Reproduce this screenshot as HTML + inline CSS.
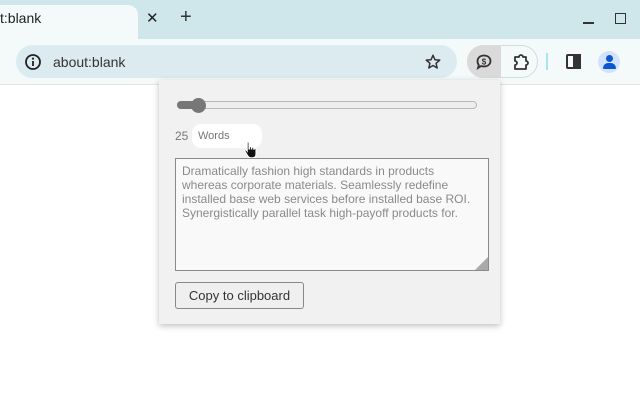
<!DOCTYPE html>
<html><head><meta charset="utf-8"><style>
*{box-sizing:border-box;margin:0;padding:0}
body{width:640px;height:400px;background:#fff;font-family:"Liberation Sans",sans-serif;position:relative;overflow:hidden}
.tabbar{position:absolute;left:0;top:0;width:640px;height:40px;background:#cfe6ea}
.tab{position:absolute;left:-10px;top:5px;width:148px;height:36px;background:#f4f9fa;border-radius:10px 10px 0 0}
.toolbar{position:absolute;left:0;top:39px;width:640px;height:46px;background:#f4f9fa;border-bottom:1px solid #dfe6e8}
.omni{position:absolute;left:16px;top:45px;width:441px;height:33px;background:#dcebef;border-radius:17px}
.abs{position:absolute}
.popup{position:absolute;left:159px;top:80px;width:341px;height:244px;background:#f1f1f1;box-shadow:0 2px 6px rgba(0,0,0,.25)}
</style></head><body>
<div class="tabbar"></div>
<div class="tab"></div>
<div class="abs" style="left:0;top:10px;font-size:14px;color:#1f1f1f">t:blank</div>
<div class="abs" style="left:146px;top:9px;font-size:15px;color:#222">✕</div>
<div class="abs" style="left:180px;top:6px;font-size:20px;color:#333">+</div>
<div class="abs" style="left:583px;top:22px;width:11px;height:2px;background:#333"></div>
<div class="abs" style="left:615px;top:13px;width:11px;height:11px;border:1.5px solid #333"></div>
<div class="toolbar"></div>
<div class="omni"></div>
<svg class="abs" style="left:24px;top:53px" width="18" height="18" viewBox="0 0 18 18"><circle cx="9" cy="9" r="7" fill="none" stroke="#222" stroke-width="1.8"/><rect x="8.1" y="8" width="1.8" height="5" fill="#222"/><circle cx="9" cy="5.6" r="1.1" fill="#222"/></svg>
<div class="abs" style="left:53px;top:54px;font-size:14px;color:#333">about:blank</div>
<svg class="abs" style="left:424px;top:53px" width="18" height="18" viewBox="0 0 24 24"><path d="M12 3l2.6 6 6.4.5-4.9 4.2 1.5 6.3L12 16.7 6.4 20l1.5-6.3L3 9.5 9.4 9z" fill="none" stroke="#333" stroke-width="2" stroke-linejoin="round"/></svg>
<div class="abs" style="left:467px;top:45px;width:71px;height:33px;border:1px solid #cfdde0;border-radius:17px"></div>
<div class="abs" style="left:467px;top:45px;width:34px;height:33px;background:#dadada;border-radius:17px 0 0 17px"></div>
<svg class="abs" style="left:474px;top:52px" width="20" height="20" viewBox="0 0 20 20"><path d="M10 3.5c4 0 6.5 2.5 6.5 5.5s-2.5 5.5-6.5 5.5c-1 0-2-.2-2.8-.5L4 16l.8-3C3.9 12 3.5 10.6 3.5 9 3.5 6 6 3.5 10 3.5z" fill="none" stroke="#333" stroke-width="1.8"/><text x="10" y="12.5" font-size="8" font-weight="bold" text-anchor="middle" fill="#333" font-family="Liberation Sans">$</text></svg>
<svg class="abs" style="left:511px;top:52px" width="20" height="20" viewBox="0 0 20 20"><path d="M4 5h4a2 2 0 0 1 4 0h3v4a2 2 0 0 1 0 4v4H4v-4a2 2 0 0 0 0-4z" fill="none" stroke="#333" stroke-width="1.8" stroke-linejoin="round"/></svg>
<div class="abs" style="left:546px;top:53px;width:2px;height:17px;background:#a8e4f0"></div>
<div class="abs" style="left:566px;top:54px;width:15px;height:15px;border:2px solid #333;border-radius:2px"></div>
<div class="abs" style="left:573px;top:54px;width:8px;height:15px;background:#333"></div>
<div class="abs" style="left:598px;top:51px;width:22px;height:22px;border-radius:50%;background:#d3e3fd"></div>
<div class="abs" style="left:606px;top:55px;width:7px;height:7px;border-radius:50%;background:#0b57d0"></div>
<div class="abs" style="left:603px;top:63px;width:13px;height:6px;border-radius:6px 6px 1px 1px;background:#0b57d0"></div>

<div class="popup"></div>
<div class="abs" style="left:177px;top:101px;width:300px;height:8px;border:1px solid #b8b8b8;border-radius:4px;background:#eee"></div>
<div class="abs" style="left:177px;top:101px;width:24px;height:8px;border-radius:4px;background:#777"></div>
<div class="abs" style="left:191px;top:98px;width:15px;height:15px;border-radius:50%;background:#777"></div>
<div class="abs" style="left:175px;top:129px;font-size:12px;color:#777">25</div>
<div class="abs" style="left:192px;top:124px;width:70px;height:24px;background:#fff;border-radius:9px"></div>
<div class="abs" style="left:198px;top:130px;font-size:11px;color:#777">Words</div>
<svg class="abs" style="left:243px;top:140px" width="18" height="20" viewBox="0 0 16 18"><path d="M4 1.5c.8 0 1.3.5 1.3 1.3V8h.4V6.5c0-.7 1.8-.7 1.8 0V8h.3V7c0-.7 1.8-.7 1.8 0v1.3h.3V8c0-.7 1.7-.7 1.7 0v4.5c0 2-1 3.5-3 3.5H7c-1.5 0-2.3-.8-3-2L1.6 10c-.5-.8.6-1.6 1.3-.9l.8 1V2.8c0-.8-.5-1.3.3-1.3z" fill="#111" stroke="#fff" stroke-width="1"/></svg>
<div class="abs" style="left:175px;top:158px;width:314px;height:113px;background:#f9f9f9;border:1px solid #8a8a8a"></div>
<div class="abs" style="left:182px;top:164px;width:290px;font-size:12px;line-height:14px;color:#8a8a8a">Dramatically fashion high standards in products whereas corporate materials. Seamlessly redefine installed base web services before installed base ROI. Synergistically parallel task high-payoff products for.</div>
<svg class="abs" style="left:475px;top:257px" width="13" height="13"><path d="M13 0V13H0z" fill="#aaa"/></svg>
<div class="abs" style="left:175px;top:282px;width:129px;height:27px;border:1px solid #888;border-radius:3px;background:#efefef;font-size:13px;color:#333;text-align:center;line-height:25px">Copy to clipboard</div>
</body></html>
